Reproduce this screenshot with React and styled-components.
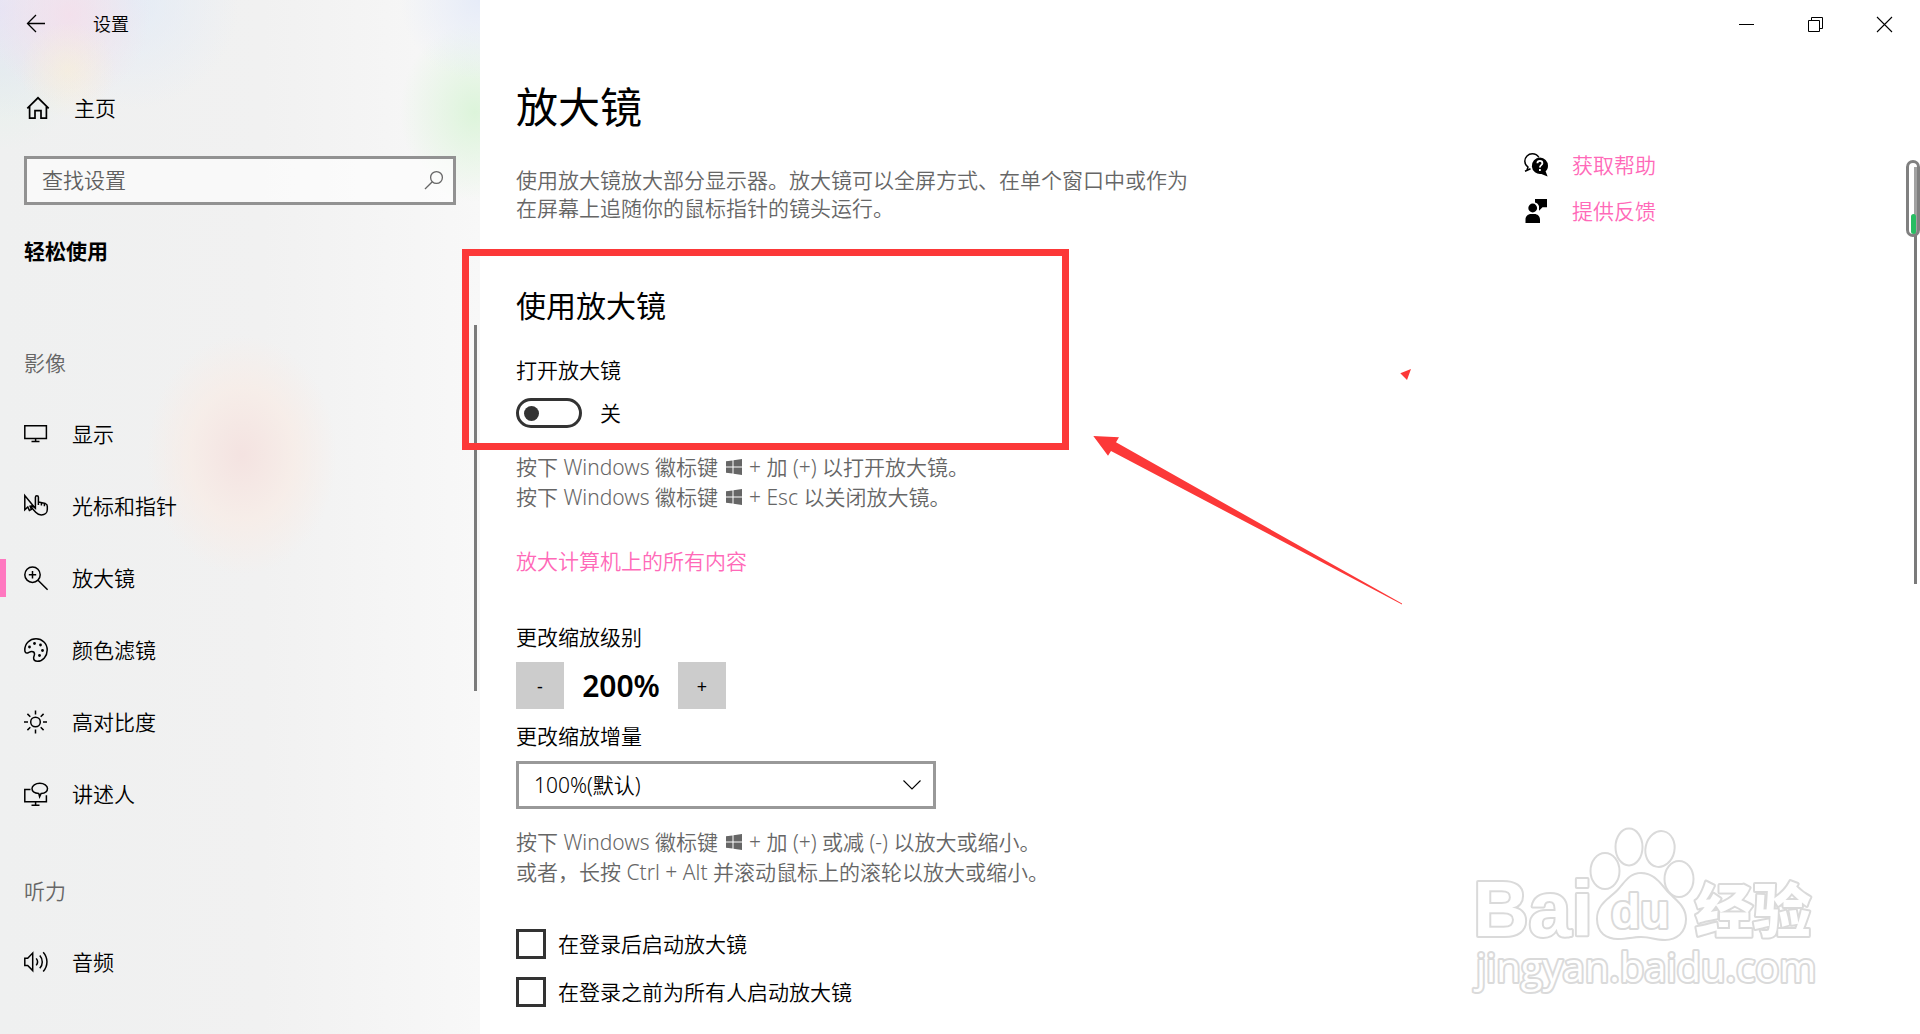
import React from 'react';
import styled, { createGlobalStyle } from 'styled-components';

const GlobalStyle = createGlobalStyle`
  *, *::before, *::after { box-sizing: border-box; }
  html, body, #root { height: 100%; }
  body {
    margin: 0;
    overflow: hidden;
    background: #fff;
    color: #000;
    font-family: "Noto Sans", "Noto Sans CJK SC", sans-serif;
    font-size: 21px;
    font-weight: 350;
    line-height: 30px;
  }
  button, input, select { font: inherit; color: inherit; }
  h1, h2, h3, p, ul { margin: 0; padding: 0; font-size: inherit; font-weight: inherit; }
  ul { list-style: none; }
`;

const Window = styled.div`
  position: relative;
  display: grid;
  grid-template-columns: 480px minmax(0, 1fr);
  height: 100vh;
  overflow: hidden;
`;

/* ---------- sidebar ---------- */

const Sidebar = styled.nav`
  position: relative;
  display: flex;
  flex-direction: column;
  min-height: 0;
  overflow: hidden;
  background:
    radial-gradient(circle at 68px 70px, rgba(248, 240, 215, 0.6), transparent 48px),
    radial-gradient(ellipse 80px 90px at 70px 15px, rgba(245, 222, 234, 0.8), transparent),
    radial-gradient(circle at 0 10px, rgba(228, 226, 246, 0.8), transparent 110px),
    radial-gradient(circle at 130px 0, rgba(224, 234, 248, 0.7), transparent 110px),
    radial-gradient(circle at 0 70px, rgba(226, 241, 234, 0.7), transparent 80px),
    radial-gradient(circle at 480px 0, rgba(228, 234, 248, 0.9), transparent 80px),
    radial-gradient(ellipse 75px 90px at 475px 112px, rgba(219, 244, 217, 0.95), transparent),
    radial-gradient(ellipse 95px 120px at 242px 455px, rgba(244, 226, 224, 0.95), rgba(248, 236, 230, 0.75) 55%, transparent),
    linear-gradient(90deg, #eff0f0, #f1f1f1 55%, #f8f8f8);
`;

const BackBar = styled.header`
  display: flex;
  align-items: center;
  gap: 45px;
  height: 48px;
  padding: 0 24px;
  font-size: 18px;
`;

const IconButton = styled.button`
  display: grid;
  place-items: center;
  width: ${(p) => p.$width}px;
  height: 48px;
  padding: 0;
  border: 0;
  background: transparent;
`;

const HomeLink = styled.a`
  display: flex;
  align-items: center;
  gap: 24px;
  height: 72px;
  margin-top: 24px;
  padding: 0 26px;
  color: inherit;
  text-decoration: none;
`;

const SearchBox = styled.label`
  display: flex;
  align-items: center;
  height: 49px;
  margin: 12px 24px 0;
  padding: 0 10px 2px 15px;
  border: 3px solid #929292;
  background: rgba(255, 255, 255, 0.6);
`;

const SearchInput = styled.input`
  flex: 1;
  min-width: 0;
  padding: 0;
  border: 0;
  outline: 0;
  background: transparent;
  &::placeholder { color: #606060; opacity: 1; }
`;

const SectionTitle = styled.h2`
  margin: 31px 24px 62px;
  font-weight: 700;
`;

const GroupTitle = styled.h3`
  padding: 0 24px;
  color: #666;
  line-height: 70px;
`;

const NavList = styled.ul`
  margin-bottom: 26px;
`;

const NavLink = styled.a`
  display: flex;
  align-items: center;
  gap: 24px;
  height: 72px;
  padding-left: 18px;
  border-left: 6px solid transparent;
  border-image: ${(p) =>
    p.$active
      ? 'linear-gradient(transparent 25%, #ff78c0 25%, #ff78c0 75%, transparent 75%) 1'
      : 'none'};
  color: inherit;
  text-decoration: none;
`;

const Glyph = styled.svg.attrs({ 'aria-hidden': true })`
  display: block;
  flex: none;
  width: ${(p) => p.$size || 24}px;
  height: ${(p) => p.$size || 24}px;
  overflow: visible;
  fill: none;
  stroke: currentColor;
  stroke-width: ${(p) => p.$weight || 1.5};
`;

const ScrollThumb = styled.div`
  position: absolute;
  top: ${(p) => p.$top}px;
  right: 3px;
  width: 3px;
  height: ${(p) => p.$length}px;
  background: #7a7a7a;
`;

/* ---------- main pane ---------- */

const Pane = styled.main`
  position: relative;
  min-width: 0;
`;

const WindowControls = styled.div`
  display: flex;
  justify-content: flex-end;
  padding-right: 1px;
`;

const Columns = styled.div`
  display: grid;
  grid-template-columns: minmax(0, 1fr) 396px;
  padding-left: 36px;
`;

const Content = styled.div`
  display: flex;
  flex-direction: column;
  align-items: flex-start;
  padding-top: 31px;
`;

const PageTitle = styled.h1`
  font-size: 42px;
  font-weight: 400;
  line-height: 56px;
`;

const Intro = styled.p`
  max-width: 684px;
  margin-top: 31px;
  color: #666;
  line-height: 28px;
`;

const Heading = styled.h2`
  margin-top: 64px;
  font-size: 30px;
  font-weight: 400;
  line-height: 40px;
`;

const FieldLabel = styled.label`
  margin-top: ${(p) => p.$space}px;
`;

const ToggleRow = styled.div`
  display: flex;
  align-items: center;
  gap: 18px;
  margin-top: 13px;
`;

const Toggle = styled.input`
  appearance: none;
  display: flex;
  align-items: center;
  width: 66px;
  height: 30px;
  margin: 0;
  padding: 0 5px;
  border: 3px solid #333;
  border-radius: 15px;
  &::before {
    content: "";
    width: 15px;
    height: 15px;
    border-radius: 50%;
    background: #333;
  }
  &:checked { justify-content: flex-end; }
`;

const Hint = styled.p`
  margin-top: ${(p) => p.$space}px;
  color: #666;
`;

const WinKey = styled.svg.attrs({ viewBox: '0 0 16 16', role: 'img', 'aria-label': 'Windows' })`
  width: 16px;
  height: 16px;
  margin: 0 2px;
  fill: #666;
`;

const TextLink = styled.a`
  margin-top: ${(p) => p.$space || 0}px;
  color: #ff69b8;
  text-decoration: none;
`;

const Stepper = styled.div`
  display: grid;
  grid-template-columns: 48px 114px 48px;
  align-items: center;
  margin-top: 10px;
`;

const StepButton = styled.button`
  height: 47px;
  padding: 0;
  border: 0;
  background: #ccc;
  font-size: 18px;
  font-weight: 400;
`;

const StepValue = styled.output`
  font-size: 30px;
  font-weight: 600;
  text-align: center;
`;

const SelectBox = styled.div`
  position: relative;
  width: 420px;
  margin-top: 10px;
`;

const Select = styled.select`
  appearance: none;
  display: block;
  width: 100%;
  height: 48px;
  padding: 0 48px 0 15px;
  border: 3px solid #999;
  border-radius: 0;
  background: #fff;
`;

const SelectArrow = styled(Glyph)`
  position: absolute;
  top: 15px;
  right: 15px;
  pointer-events: none;
`;

const CheckList = styled.div`
  display: flex;
  flex-direction: column;
  gap: 18px;
  margin-top: 42px;
`;

const CheckRow = styled.label`
  display: flex;
  align-items: center;
  gap: 12px;
`;

const CheckBox = styled.input`
  appearance: none;
  width: 30px;
  height: 30px;
  margin: 0;
  border: 3px solid #333;
  &:checked { background: #ff78c0; }
`;

const HelpLinks = styled.aside`
  display: flex;
  flex-direction: column;
  gap: 16px;
  padding-top: 102px;
`;

const HelpItem = styled.div`
  display: flex;
  align-items: center;
  gap: 24px;
`;

/* ---------- overlays ---------- */

const HighlightFrame = styled.div`
  position: absolute;
  top: 249px;
  left: 462px;
  width: 607px;
  height: 201px;
  border: 7px solid #fc3838;
  pointer-events: none;
`;

const ArrowMark = styled.svg`
  position: absolute;
  top: 360px;
  left: 1080px;
  width: 350px;
  height: 260px;
  fill: #fc3838;
  pointer-events: none;
`;

const Capsule = styled.div`
  position: absolute;
  top: 160px;
  right: 0;
  display: flex;
  justify-content: center;
  align-items: flex-end;
  width: 14px;
  height: 77px;
  border: 3px solid #808080;
  border-radius: 7px;
  background: rgba(255, 255, 255, 0.3);
`;

const CapsuleLevel = styled.div`
  width: 5px;
  height: 20px;
  border-radius: 3px;
  background: #27bd62;
`;

const Watermark = styled.svg`
  position: absolute;
  right: 80px;
  bottom: 24px;
  width: 380px;
  height: 190px;
  fill: #fff;
  stroke: #dadada;
  stroke-width: 4;
  stroke-linejoin: round;
  paint-order: stroke;
  pointer-events: none;
`;

const icons = {
  display: (
    <>
      <path d="M.8 3.8h21.6v12.6H.8zM11.6 16.4v2.8M7.5 19.4h8" />
    </>
  ),
  pointer: (
    <>
      <path d="M.8 1.5v14.3l3-2.8 1.6 3.4 2-1-1.2-3.2h3.4z" />
      <path d="M11.4 10.2V3.2c0-2 3-2 3 0V8l7 1.6c1.4.4 1.9 1.3 1.9 2.6v3.4c0 3.2-2.6 5.4-6 5.4-2.6 0-4-.9-5.6-2.7L6.6 12.6c1.6-1.2 3.3 0 4.8 1.6zM17.400 9v2.600M20.400 9.600v2.600M14.400 8v3" />
    </>
  ),
  magnifier: (
    <path d="M16.2 8.700a7.700 7.700 0 1 1-15.400 0a7.700 7.700 0 0 1 15.400 0zM14 14.200l9.600 9.500M8.500 5v7.400M4.800 8.700h7.400" />
  ),
  palette: (
    <>
      <path d="M12 .8c6.300 0 11.200 4.800 11.200 11.200 0 6-4.400 11.300-9.800 11.300-2.400 0-3.800-1.300-3.800-3.200 0-1.600.9-2.600.9-4 0-1.700-1.200-2.700-2.800-2.700-2.200 0-3.200 1.700-4.900 1.700C1.500 15.100.8 13.700.8 12 .8 5.600 5.700.8 12 .8z" />
      <g fill="currentColor" stroke="none">
        <circle cx="5.500" cy="9" r="1.400" />
        <circle cx="10.500" cy="5.500" r="1.400" />
        <circle cx="16.500" cy="7" r="1.400" />
        <circle cx="18.500" cy="12.500" r="1.400" />
        <circle cx="15.500" cy="17.500" r="1.400" />
      </g>
    </>
  ),
  contrast: (
    <>
      <circle cx="11.500" cy="12" r="4.800" />
      <path d="M11.500.5v4M11.500 19.500v4M0 12h4M19 12h4M3.400 3.900l2.900 2.900M16.700 17.200l2.900 2.900M19.600 3.900l-2.900 2.900M6.300 17.200l-2.900 2.900" />
    </>
  ),
  narrator: (
    <>
      <path d="M6.500 7.600H.8v12.200h21.600v-6.500M11.600 19.800v3.400M7.500 23.200h8" />
      <path d="M14.800 11.600c-4-.3-6.800-2.300-6.800-5C8 3.600 11.500 1.300 15.800 1.300s7.700 2.200 7.700 5.100c0 2.700-2.700 4.800-6.500 5.200l-1.400 3.200z" />
    </>
  ),
  audio: (
    <path d="M.8 8.200h2.900l5-5.200v17.600l-5-5.200H.8zM12.200 8.400c1.600 2 1.600 5 0 7M15.800 5.500c3.300 3.800 3.300 9 0 12.800M19.200 2.200c5 5.600 5 13.700 0 19.400" />
  ),
};

const groups = [
  {
    title: '影像',
    items: [
      ['display', '显示'],
      ['pointer', '光标和指针'],
      ['magnifier', '放大镜'],
      ['palette', '颜色滤镜'],
      ['contrast', '高对比度'],
      ['narrator', '讲述人'],
    ],
  },
  { title: '听力', items: [['audio', '音频']] },
];

const WindowsLogo = () => (
  <WinKey>
    <path d="M0 2.300 6.500 1.400V7.500H0zM7.500 1.200 16 0V7.500H7.500zM0 8.500H6.500V14.600L0 13.700zM7.500 8.500H16V16L7.500 14.800z" />
  </WinKey>
);

export default function App() {
  return (
    <Window>
      <GlobalStyle />
      <Sidebar aria-label="设置">
        <BackBar>
          <IconButton $width={24} aria-label="返回">
            <Glyph $size={18} $weight={1.3} viewBox="0 0 18 18">
              <path d="M18 8.500H.5M9 0 .5 8.500 9 17" />
            </Glyph>
          </IconButton>
          <span>设置</span>
        </BackBar>
        <HomeLink href="#home">
          <Glyph $weight={1.7} viewBox="0 0 24 24">
            <path d="M1.300 12.300 12 1.800l10.700 10.500M3.600 10.500v11.700h5.400v-7.600h6v7.600h5.400V10.500" />
          </Glyph>
          主页
        </HomeLink>
        <SearchBox>
          <SearchInput type="text" placeholder="查找设置" aria-label="查找设置" />
          <Glyph $size={18} $weight={1.3} viewBox="0 0 18 18" color="#666">
            <circle cx="11.500" cy="6.500" r="5.900" />
            <path d="M7.300 10.700 0 18" />
          </Glyph>
        </SearchBox>
        <SectionTitle>轻松使用</SectionTitle>
        {groups.map((group) => (
          <React.Fragment key={group.title}>
            <GroupTitle>{group.title}</GroupTitle>
            <NavList>
              {group.items.map(([icon, name]) => (
                <li key={icon}>
                  <NavLink
                    href={`#${icon}`}
                    $active={icon === 'magnifier'}
                    aria-current={icon === 'magnifier' ? 'page' : undefined}
                  >
                    <Glyph viewBox="0 0 24 24">{icons[icon]}</Glyph>
                    {name}
                  </NavLink>
                </li>
              ))}
            </NavList>
          </React.Fragment>
        ))}
        <ScrollThumb $top={325} $length={366} />
      </Sidebar>

      <Pane>
        <WindowControls>
          <IconButton $width={69} aria-label="最小化">
            <Glyph $size={15} $weight={1} viewBox="0 0 15 15">
              <path d="M0 7.500h15" />
            </Glyph>
          </IconButton>
          <IconButton $width={69} aria-label="还原">
            <Glyph $size={15} $weight={1} viewBox="0 0 15 15">
              <path d="M.5 3.500h11v11H.5zM3.500 3.500v-3h11v11h-3" />
            </Glyph>
          </IconButton>
          <IconButton $width={69} aria-label="关闭">
            <Glyph $size={15} $weight={1.1} viewBox="0 0 15 15">
              <path d="M0 0l15 15M15 0 0 15" />
            </Glyph>
          </IconButton>
        </WindowControls>

        <Columns>
          <Content>
            <PageTitle>放大镜</PageTitle>
            <Intro>
              使用放大镜放大部分显示器。放大镜可以全屏方式、在单个窗口中或作为在屏幕上追随你的鼠标指针的镜头运行。
            </Intro>

            <Heading>使用放大镜</Heading>
            <FieldLabel $space={29} htmlFor="magnifier-on">打开放大镜</FieldLabel>
            <ToggleRow>
              <Toggle id="magnifier-on" type="checkbox" role="switch" />
              <span>关</span>
            </ToggleRow>
            <Hint $space={24}>
              按下 Windows 徽标键 <WindowsLogo /> + 加 (+) 以打开放大镜。
              <br />
              按下 Windows 徽标键 <WindowsLogo /> + Esc 以关闭放大镜。
            </Hint>
            <TextLink $space={34} href="#everything">放大计算机上的所有内容</TextLink>

            <FieldLabel $space={46} as="div" id="zoom-level">更改缩放级别</FieldLabel>
            <Stepper role="group" aria-labelledby="zoom-level">
              <StepButton aria-label="缩小">-</StepButton>
              <StepValue>200%</StepValue>
              <StepButton aria-label="放大">+</StepButton>
            </Stepper>
            <FieldLabel $space={12} htmlFor="zoom-step">更改缩放增量</FieldLabel>
            <SelectBox>
              <Select id="zoom-step" defaultValue="100">
                <option value="100">100%(默认)</option>
              </Select>
              <SelectArrow $size={18} $weight={1.1} viewBox="0 0 18 18">
                <path d="M.5 4.500 9 13l8.500-8.500" />
              </SelectArrow>
            </SelectBox>
            <Hint $space={18}>
              按下 Windows 徽标键 <WindowsLogo /> + 加 (+) 或减 (-) 以放大或缩小。
              <br />
              或者，长按 Ctrl + Alt 并滚动鼠标上的滚轮以放大或缩小。
            </Hint>

            <CheckList>
              <CheckRow>
                <CheckBox type="checkbox" />
                在登录后启动放大镜
              </CheckRow>
              <CheckRow>
                <CheckBox type="checkbox" />
                在登录之前为所有人启动放大镜
              </CheckRow>
            </CheckList>
          </Content>

          <HelpLinks>
            <HelpItem>
              <Glyph viewBox="0 0 24 24">
                <path d="M2.800 17.500 4 14C2 12.600.8 10.500.8 8.200.8 4 4.200.8 8.300.8c2.800 0 5.200 1.400 6.500 3.600M1 18.300l5.500-2.500" />
                <path
                  fill="currentColor"
                  stroke="none"
                  d="M16 4.500a8.200 8.200 0 0 1 8 8.200c0 2.300-.9 4.200-2.400 5.600l2 5.300-6.200-2.600A8.300 8.300 0 1 1 16 4.500z"
                />
                <path stroke="#fff" strokeWidth="1.800" d="M13.400 10.200c0-3.200 5-3.200 5 0 0 2-2.500 2-2.500 4.300M15.900 16v2" />
              </Glyph>
              <TextLink href="#help">获取帮助</TextLink>
            </HelpItem>
            <HelpItem>
              <Glyph viewBox="0 0 24 24">
                <g fill="currentColor" stroke="none">
                  <circle cx="8.700" cy="9" r="4.400" />
                  <path d="M1.500 24v-3.500c0-3.300 2.700-5.500 5.500-5.500h3.500c2.800 0 5.500 2.200 5.500 5.500V24zM11 0h12v8.300h-4.500L15 11.800V7.200C14.500 5.300 13 4 11 3.500z" />
                </g>
              </Glyph>
              <TextLink href="#feedback">提供反馈</TextLink>
            </HelpItem>
          </HelpLinks>
        </Columns>
        <ScrollThumb $top={167} $length={417} />
        <Capsule>
          <CapsuleLevel />
        </Capsule>
      </Pane>

      <HighlightFrame />
      <ArrowMark viewBox="0 0 350 260">
        <path d="M13.300 76 39 77.300l-3 5L322 243.600v.8L31 91l-3 4.700zM331 9l-10.700 4.300L327 20z" />
      </ArrowMark>
      <Watermark viewBox="0 0 380 190">
        <text x="13" y="116" fontSize="77" fontWeight="700" fontFamily="Liberation Sans, sans-serif">Bai</text>
        <ellipse cx="145" cy="51" rx="13.500" ry="17" />
        <ellipse cx="169" cy="27" rx="12.500" ry="17.500" />
        <ellipse cx="200" cy="29" rx="13.500" ry="17" transform="rotate(12 200 29)" />
        <ellipse cx="219" cy="59" rx="13.500" ry="17" />
        <path d="M181 54c-12 0-16 10-23 17-9 9-20 14-20 28 0 13 9 19 20 19 9 0 15-2 23-2 9 0 15 3 24 3 11 0 20-7 20-20 0-14-13-20-20-29-6-7-12-16-24-16z" />
        <text x="151" y="108" fontSize="48" fontWeight="700" fontFamily="Liberation Sans, sans-serif">du</text>
        <text x="235" y="112" fontSize="58" fontWeight="900" fontFamily="Noto Sans CJK SC, sans-serif">经验</text>
        <text x="16" y="162" fontSize="40" fontWeight="400" fontFamily="Open Sans, sans-serif">jingyan.baidu.com</text>
      </Watermark>
    </Window>
  );
}
